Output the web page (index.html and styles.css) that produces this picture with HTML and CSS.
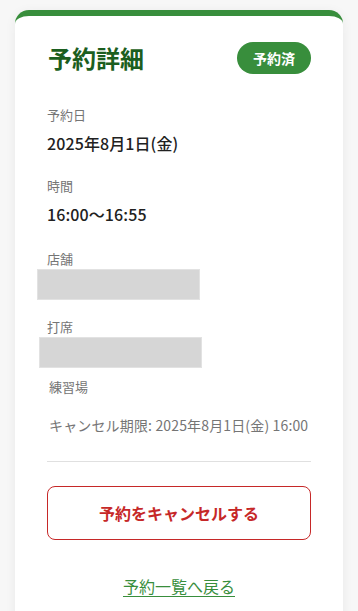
FILE: index.html
```html
<!DOCTYPE html>
<html lang="ja">
<head>
<meta charset="utf-8">
<title>予約詳細</title>
<link rel="stylesheet" href="styles.css">
</head>
<body>
<main class="page">
  <section class="card">
    <header class="card-header">
      <h1 class="title">予約詳細</h1>
      <span class="badge">予約済</span>
    </header>

    <div class="field field-date">
      <div class="label">予約日</div>
      <div class="value">2025年8月1日(金)</div>
    </div>

    <div class="field field-time">
      <div class="label">時間</div>
      <div class="value">16:00〜16:55</div>
    </div>

    <div class="field field-store">
      <div class="label">店舗</div>
      <div class="redacted redacted-store"></div>
    </div>

    <div class="field field-seat">
      <div class="label">打席</div>
      <div class="redacted redacted-seat"></div>
    </div>

    <div class="sub-label">練習場</div>

    <p class="deadline">キャンセル期限: 2025年8月1日(金) 16:00</p>

    <hr class="divider">

    <button class="cancel-btn" type="button">予約をキャンセルする</button>

    <a class="back-link" href="#">予約一覧へ戻る</a>
  </section>
</main>
</body>
</html>
```

FILE: styles.css
```css
* {
  box-sizing: border-box;
}

html, body {
  margin: 0;
  padding: 0;
}

body {
  background: #f7f7f7;
  font-family: "Noto Sans CJK JP", "Noto Sans", sans-serif;
  color: #212121;
}

.page {
  padding: 10px 15px 0;
}

.card {
  background: #ffffff;
  border-top: 6px solid #388e3c;
  border-radius: 14px;
  box-shadow: 0 2px 12px rgba(0, 0, 0, 0.06);
  padding: 26px 32px 40px;
  display: flex;
  flex-direction: column;
  min-height: 640px;
}

.card-header {
  display: flex;
  justify-content: space-between;
  align-items: center;
  height: 32px;
  margin-bottom: 31px;
}

.title {
  margin: 0;
  font-size: 24px;
  line-height: 32px;
  font-weight: 700;
  color: #1b5e20;
  padding-left: 1px;
}

.badge {
  display: inline-flex;
  align-items: center;
  justify-content: center;
  height: 32px;
  padding: 0 16px;
  border-radius: 16px;
  background: #388e3c;
  color: #ffffff;
  font-size: 14px;
  font-weight: 700;
}

.field {
  display: flex;
  flex-direction: column;
}

.label {
  font-size: 13px;
  line-height: 20px;
  color: #757575;
}

.value {
  margin-top: 6px;
  font-size: 16px;
  line-height: 24px;
  font-weight: 500;
  color: #212121;
  letter-spacing: 0.1px;
}

.field-date {
  margin-bottom: 21px;
}

.field-time {
  margin-bottom: 22px;
}

.field-store .label,
.field-seat .label {
  line-height: 21px;
}

.redacted {
  width: 163px;
  height: 31px;
  background: #d6d6d6;
  border: 1px solid #e2e2e2;
}

.redacted-store {
  margin-left: -10px;
}

.redacted-seat {
  margin-left: -8px;
}

.field-store {
  margin-bottom: 16px;
}

.field-seat {
  margin-bottom: 9px;
}

.sub-label {
  font-size: 13px;
  line-height: 20px;
  color: #757575;
  padding-left: 2px;
}

.deadline {
  margin: 17px 0 0;
  padding-left: 2px;
  font-size: 14px;
  line-height: 22px;
  color: #757575;
  white-space: nowrap;
  letter-spacing: 0.15px;
}

.divider {
  border: none;
  border-top: 1px solid #e0e0e0;
  margin: 25px 0 24px;
  width: 100%;
}

.cancel-btn {
  display: block;
  width: 100%;
  height: 54px;
  border: 1px solid #c62828;
  border-radius: 8px;
  background: #ffffff;
  color: #c62828;
  font-family: inherit;
  font-size: 16px;
  font-weight: 700;
  cursor: pointer;
}

.back-link {
  align-self: center;
  margin-top: 34px;
  font-size: 16px;
  line-height: 24px;
  color: #388e3c;
  text-decoration: underline;
  text-underline-offset: 3px;
}
```
